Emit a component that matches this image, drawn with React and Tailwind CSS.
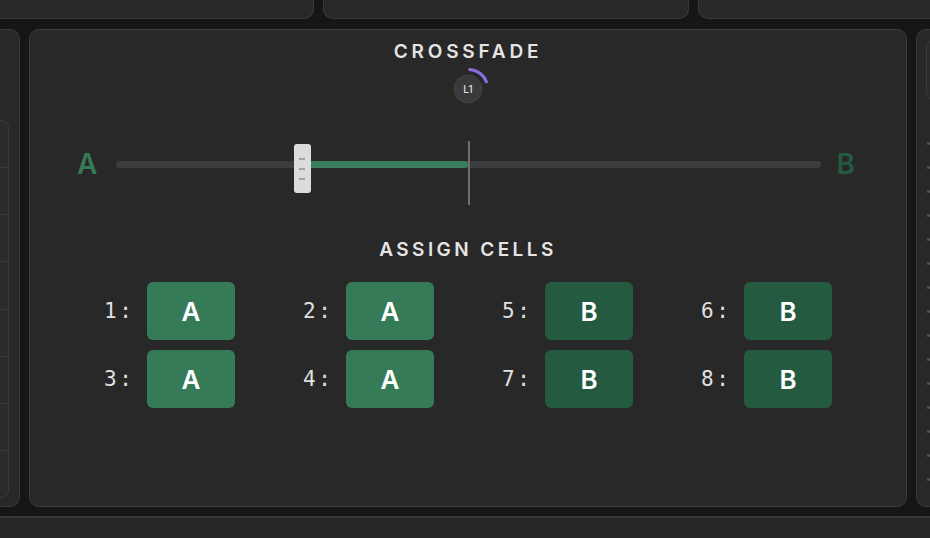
import React from 'react';

const CROSSFADE = 0.264;

const cells = [
  { n: 1, v: 'A' },
  { n: 2, v: 'A' },
  { n: 5, v: 'B' },
  { n: 6, v: 'B' },
  { n: 3, v: 'A' },
  { n: 4, v: 'A' },
  { n: 7, v: 'B' },
  { n: 8, v: 'B' },
];

const Knob = () => (
  <div className="relative h-[44px] w-[44px]">
    <svg width="44" height="44" viewBox="0 0 44 44" className="absolute inset-0">
      <circle cx="22" cy="22" r="14" fill="#3a3a3a" stroke="#424242" strokeWidth="1" />
      <path d="M22.5 2.5 A19.5 19.5 0 0 1 40.8 16" fill="none" stroke="#8a6de0" strokeWidth="3.2" />
    </svg>
    <span className="absolute inset-0 flex items-center justify-center text-[10px] font-medium text-[#dedede]">
      L1
    </span>
  </div>
);

const Slider = () => {
  const trackW = 705;
  const thumbLeft = CROSSFADE * trackW - 8.5;
  const fillLeft = thumbLeft + 17;
  const center = trackW / 2;
  return (
    <div className="relative h-[64px] flex-1">
      <div className="absolute left-0 right-0 top-[20px] h-[7px] rounded-full bg-[#3c3c3c]" />
      <div className="absolute top-[20px] h-[7px] rounded-r-full bg-[#3a7d5a]" style={{ left: fillLeft, width: center - fillLeft }} />
      <div className="absolute top-0 h-[64px] w-[2px] bg-[#6e6e6e]" style={{ left: center - 1 }} />
      <div
        className="absolute top-[3px] flex h-[49px] w-[17px] flex-col items-center justify-center gap-[8px] rounded-[3px] bg-[#dcdcdc]"
        style={{ left: thumbLeft }}
      >
        <span className="h-[2px] w-[6px] bg-[#a3a3a3]" />
        <span className="h-[2px] w-[6px] bg-[#a3a3a3]" />
        <span className="h-[2px] w-[6px] bg-[#a3a3a3]" />
      </div>
    </div>
  );
};

export default function App() {
  return (
    <div className="flex h-[538px] w-[930px] flex-col overflow-hidden bg-[#161616]" style={{ fontFamily: 'Inter, sans-serif' }}>
      {/* top strip */}
      <div className="flex h-[19px] gap-[9px]">
        <div className="ml-[-20px] h-full w-[334px] shrink-0 rounded-b-[10px] border border-t-0 border-[#3a3a3a] bg-[#282828]" />
        <div className="h-full w-[366px] shrink-0 rounded-b-[10px] border border-t-0 border-[#3a3a3a] bg-[#282828]" />
        <div className="h-full w-[300px] shrink-0 rounded-b-[10px] border border-t-0 border-[#3a3a3a] bg-[#282828]" />
      </div>

      <div className="mt-[10px] flex h-[478px] gap-[9px]">
        {/* left column */}
        <div className="ml-[-20px] w-[40px] shrink-0 rounded-[10px] border border-[#3a3a3a] bg-[#282828] pr-[10px] pt-[90px]">
          <div className="flex h-[378px] flex-col overflow-hidden rounded-r-[8px] border border-l-0 border-[#3a3a3a] bg-[#2b2b2b]">
            {[0, 1, 2, 3, 4, 5, 6, 7].map((i) => (
              <div key={i} className="flex-1 border-b border-[#3a3a3a] last:border-b-0" />
            ))}
          </div>
        </div>

        {/* crossfade panel */}
        <div className="flex w-[878px] shrink-0 flex-col items-center rounded-[10px] border border-[#3d3d3d] bg-[#282828]">
          <h1 className="mt-[11px] text-[19px] font-semibold leading-[22px] tracking-[0.2em] text-[#e4e4e4]">CROSSFADE</h1>
          <div className="mt-[4px]">
            <Knob />
          </div>

          <div className="mt-[30px] flex w-full items-center pl-[47px] pr-[51px]">
            <div className="mb-[18px] w-[39px] text-[28px] font-semibold leading-none text-[#347a57]">A</div>
            <Slider />
            <div className="mb-[18px] w-[34px] text-right text-[28px] font-semibold leading-none text-[#245a40]">B</div>
          </div>

          <h2 className="mt-[34px] text-[19px] font-semibold leading-[22px] tracking-[0.18em] text-[#e4e4e4]">ASSIGN CELLS</h2>

          <div className="mt-[21px] grid grid-cols-4 gap-x-[68px] gap-y-[10px]">
            {cells.map((c) => (
              <div key={c.n} className="flex items-center">
                <span
                  className="mt-[2px] w-[43px] text-[21px] tracking-[0.12em] text-[#e0e0e0]"
                  style={{ fontFamily: '"DejaVu Sans Mono", "Liberation Mono", monospace' }}
                >
                  {c.n}:
                </span>
                <div
                  className={`flex h-[58px] w-[88px] items-center justify-center rounded-[6px] text-[26px] font-semibold text-white ${
                    c.v === 'A' ? 'bg-[#367b58]' : 'bg-[#245a40]'
                  }`}
                >
                  {c.v}
                </div>
              </div>
            ))}
          </div>
        </div>

        {/* right column */}
        <div className="w-[40px] shrink-0 rounded-[10px] border border-[#3a3a3a] bg-[#282828] pl-[9px] pt-[10px]">
          <div className="h-[60px] rounded-l-[8px] border border-r-0 border-[#3a3a3a] bg-[#2b2b2b]" />
          <div className="mt-[42px] flex flex-col gap-[21px] pl-[1px]">
            {Array.from({ length: 15 }).map((_, i) => (
              <span key={i} className="h-[3px] w-[3px] rounded-full bg-[#5a5a5a]" />
            ))}
          </div>
        </div>
      </div>

      <div className="mt-[9px] flex-1 border-t-2 border-[#3a3a3a] bg-[#272727]" />
    </div>
  );
}
